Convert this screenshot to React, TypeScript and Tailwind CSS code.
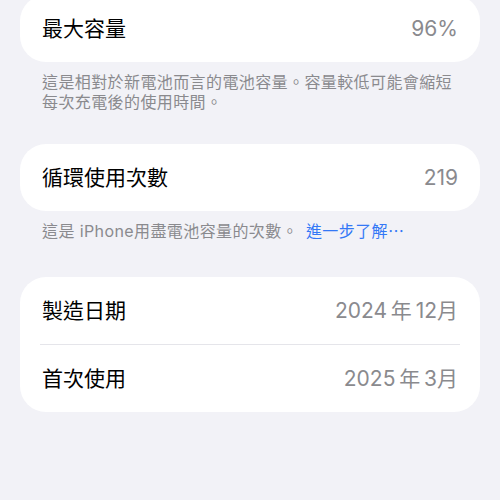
const font = { fontFamily: 'Inter, "Noto Sans CJK TC", sans-serif' };

function Row({ label, value }: { label: string; value: string }) {
  return (
    <div className="flex h-[67px] items-center justify-between px-[22px]">
      <span className="text-[21px] text-black">{label}</span>
      <span className="text-[21px] text-[#8a8a8e]">{value}</span>
    </div>
  );
}

function Note({ children }: { children: React.ReactNode }) {
  return (
    <p className="px-[42px] pt-[10px] text-[16px] leading-[20px] tracking-[0.4px] text-[#8a8a8e]">
      {children}
    </p>
  );
}

export default function App() {
  return (
    <div className="h-[500px] w-[500px] overflow-hidden bg-[#f2f2f7]" style={font}>
      <div className="-mt-[5px] mx-5 rounded-[26px] bg-white">
        <Row label="最大容量" value="96%" />
      </div>
      <Note>
        這是相對於新電池而言的電池容量。容量較低可能會縮短每次充電後的使用時間。
      </Note>

      <div className="mx-5 mt-[32px] rounded-[26px] bg-white">
        <Row label="循環使用次數" value="219" />
      </div>
      <Note>
        這是 iPhone用盡電池容量的次數。 <span className="ml-[3px] text-[#3478f6]">進一步了解⋯</span>
      </Note>

      <div className="mx-5 mt-[36px] rounded-[26px] bg-white">
        <Row label="製造日期" value={'2024\u2009年\u200912月'} />
        <div className="mx-5 h-px bg-[#e5e5ea]" />
        <Row label="首次使用" value={'2025\u2009年\u20093月'} />
      </div>
    </div>
  );
}
